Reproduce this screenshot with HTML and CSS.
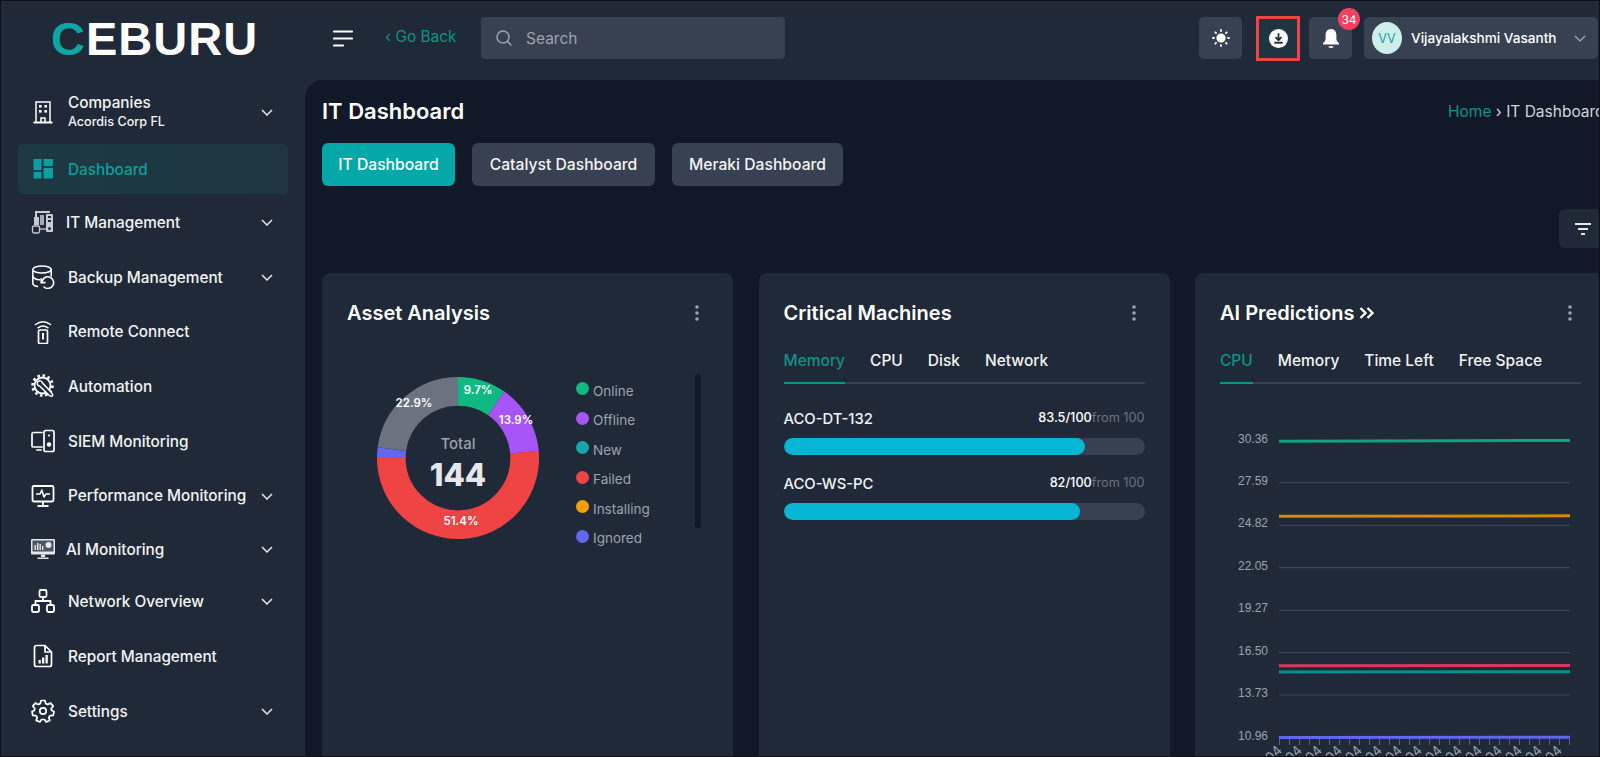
FILE: index.html
```html
<!DOCTYPE html>
<html lang="en">
<head>
<meta charset="utf-8">
<title>IT Dashboard</title>
<link rel="stylesheet" href="styles.css">
</head>
<body>
<header class="topbar">
  <div class="brand"><span class="brand-c">C</span>EBURU</div>
  <button class="hamburger" aria-label="Menu"><svg width="20" height="17" viewBox="0 0 20 17"><path d="M1 1.5H19M1 8.5H19M1 15.5H10" stroke="#fff" stroke-width="2.2" stroke-linecap="round" fill="none"/></svg></button>
  <a class="goback"><span class="goback-arrow">‹</span> Go Back</a>
  <div class="search">
    <svg width="18" height="18" viewBox="0 0 18 18" fill="none" stroke="#9ca3af" stroke-width="1.5"><circle cx="8" cy="8" r="6"/><path d="M12.5 12.5L16 16" stroke-linecap="round"/></svg>
    <span>Search</span>
  </div>
  <div class="top-actions">
    <button class="icon-btn" aria-label="Theme"><svg width="18" height="18" viewBox="0 0 18 18"><circle cx="9" cy="9" r="4.6" fill="#fff"/><g stroke="#fff" stroke-width="1.8" stroke-linecap="round"><path d="M9 1V2M9 16V17M1 9H2M16 9H17M3.3 3.3L4 4M14 14L14.7 14.7M3.3 14.7L4 14M14 4L14.7 3.3"/></g></svg></button>
    <button class="icon-btn download" aria-label="Download"><svg width="19" height="19" viewBox="0 0 18 18"><circle cx="9" cy="9" r="9" fill="#fff"/><path d="M9 4V10M6.2 7.8L9 10.6L11.8 7.8" stroke="#1f2937" stroke-width="1.7" fill="none"/><path d="M5 13H13" stroke="#1f2937" stroke-width="1.8"/></svg></button>
    <button class="icon-btn bell" aria-label="Notifications"><svg width="18" height="21" viewBox="0 0 18 21"><path d="M9 1C5.5 1 3.6 3.8 3.6 7V11C3.6 12.8 2.4 14 1 15.3V16.4H17V15.3C15.6 14 14.4 12.8 14.4 11V7C14.4 3.8 12.5 1 9 1Z" fill="#fff"/><path d="M6.6 18.3H11.4V19.2Q9 20.6 6.6 19.2Z" fill="#fff"/></svg><span class="badge">34</span></button>
    <div class="user">
      <span class="avatar">VV</span>
      <span class="user-name">Vijayalakshmi Vasanth</span>
      <svg class="user-caret" width="12" height="7" viewBox="0 0 12 7" fill="none" stroke="#9ca3af" stroke-width="1.3"><path d="M1 1L6 6L11 1"/></svg>
    </div>
  </div>
</header>

<div class="layout">
  <aside class="sidebar">
    <nav class="nav">
      <a class="nav-item nav-company">
        <svg class="nav-icon" width="24" height="24" viewBox="0 0 24 24" fill="none" stroke="#fff" stroke-width="1.5"><path d="M5 22.5V2H19V22.5"/><path d="M2.5 22.5H21.5" stroke-width="2"/><path d="M10 22.5V18H14V22.5"/><g fill="#fff" stroke="none"><rect x="8" y="5" width="2.6" height="2.6"/><rect x="13.4" y="5" width="2.6" height="2.6"/><rect x="8" y="10" width="2.6" height="2.6"/><rect x="13.4" y="10" width="2.6" height="2.6"/></g></svg>
        <span class="nav-stack"><span class="nav-label">Companies</span><span class="nav-sub">Acordis Corp FL</span></span>
        <svg class="chev" width="12" height="7" viewBox="0 0 12 7"><path d="M1 1L6 6L11 1"/></svg>
      </a>
      <a class="nav-item nav-active">
        <svg class="nav-icon" width="24" height="24" viewBox="0 0 24 24" fill="#0d9f9f"><rect x="2.5" y="2" width="8" height="11"/><rect x="12.5" y="2" width="9.5" height="7"/><rect x="2.5" y="15" width="8" height="6.5"/><rect x="12.5" y="11" width="9.5" height="10.5"/></svg>
        <span class="nav-label">Dashboard</span>
      </a>
      <a class="nav-item nav-close">
        <svg class="nav-icon" width="24" height="24" viewBox="0 0 24 24" fill="#c7ccd3"><path d="M4 1H19V3H6V8H4Z"/><rect x="3" y="7" width="5" height="8"/><rect x="9" y="5" width="4" height="10" opacity=".8"/><rect x="15" y="4" width="7" height="18" rx="1"/><rect x="17" y="6" width="3" height="2" fill="#1f2937"/><rect x="17" y="10" width="3" height="2" fill="#1f2937"/><circle cx="18.5" cy="18.5" r="1.5" fill="#1f2937"/><rect x="1.5" y="16" width="7" height="7" rx="1.5" fill="none" stroke="#c7ccd3" stroke-width="1.3"/><path d="M9 19H15" stroke="#c7ccd3" stroke-width="1.3"/></svg>
        <span class="nav-label">IT Management</span>
        <svg class="chev" width="12" height="7" viewBox="0 0 12 7"><path d="M1 1L6 6L11 1"/></svg>
      </a>
      <a class="nav-item">
        <svg class="nav-icon" width="24" height="24" viewBox="0 0 24 24" fill="none" stroke="#fff" stroke-width="1.6" stroke-linecap="round"><ellipse cx="11" cy="4.5" rx="9.2" ry="3.5"/><path d="M1.8 4.5V18C1.8 19.8 3.5 21 6.5 21.5"/><path d="M20.2 4.5V11"/><path d="M1.8 11.5C2.5 13.5 5 14.5 8.5 14.8"/><path d="M11 17.5A5.8 5.8 0 1 1 13 22"/><path d="M10.2 13.8V17.6H14"/></svg>
        <span class="nav-label">Backup Management</span>
        <svg class="chev" width="12" height="7" viewBox="0 0 12 7"><path d="M1 1L6 6L11 1"/></svg>
      </a>
      <a class="nav-item">
        <svg class="nav-icon" width="24" height="24" viewBox="0 0 24 24" fill="none" stroke="#fff" stroke-width="1.5" stroke-linecap="round"><path d="M4.5 4.5Q12 -1 19.5 4.5"/><path d="M7 7.8Q12 4 17 7.8"/><rect x="7.5" y="10" width="9" height="13.5" rx="1.2" stroke-width="1.7"/><rect x="11" y="13" width="2" height="6.5" fill="#fff" stroke="none"/></svg>
        <span class="nav-label">Remote Connect</span>
      </a>
      <a class="nav-item">
        <svg class="nav-icon" width="24" height="24" viewBox="0 0 24 24" fill="none" stroke="#fff"><circle cx="11.5" cy="11.5" r="8" stroke-width="1.8"/><circle cx="11.5" cy="11.5" r="10" stroke-width="2.6" stroke-dasharray="2.6 2.6"/><path d="M7 7.5C8.5 6.2 11 6.7 11.3 8.8L19.5 17.5C20.8 19 22.6 20.8 21.3 22C20 23 18.2 21.5 17 20.2L8.6 12C6.5 12 5.5 9.5 7 7.5Z" fill="#1f2937" stroke-width="1.5"/></svg>
        <span class="nav-label">Automation</span>
      </a>
      <a class="nav-item">
        <svg class="nav-icon" width="24" height="24" viewBox="0 0 24 24" fill="none" stroke="#fff" stroke-width="1.7" stroke-linecap="round"><path d="M11 3.5H2.5Q1 3.5 1 5V17Q1 18 2.5 18H11"/><path d="M6 21H10"/><rect x="13" y="1.5" width="10" height="21" rx="1.8"/><circle cx="18" cy="6.5" r="1.1" fill="#fff" stroke="none"/><circle cx="18" cy="15.5" r="2.2" fill="#fff" stroke="none"/></svg>
        <span class="nav-label">SIEM Monitoring</span>
      </a>
      <a class="nav-item">
        <svg class="nav-icon" width="24" height="24" viewBox="0 0 24 24" fill="none" stroke="#fff" stroke-width="1.8" stroke-linejoin="round"><rect x="1.5" y="2" width="21" height="15.5" rx="1.5"/><path d="M5 10H9L10.8 6L13 13L15 10H19" stroke-width="1.5"/><path d="M12 17.5V21.5M6.5 22H17.5"/></svg>
        <span class="nav-label">Performance Monitoring</span>
        <svg class="chev" width="12" height="7" viewBox="0 0 12 7"><path d="M1 1L6 6L11 1"/></svg>
      </a>
      <a class="nav-item nav-close nav-h52">
        <svg class="nav-icon" width="24" height="24" viewBox="0 0 24 24"><rect x="0" y="2" width="24" height="15.5" rx="1" fill="#e5e7eb"/><rect x="1.5" y="3.5" width="21" height="11" fill="#4b5563"/><g fill="#e5e7eb"><rect x="3.5" y="8" width="1.4" height="5"/><rect x="6" y="6" width="1.4" height="7"/><rect x="8.500" y="7" width="1.4" height="6"/><rect x="11" y="9" width="1.4" height="4"/><circle cx="17.500" cy="8" r="3"/></g><path d="M10 17.500H14V20H10ZM6.500 20.500H17.500V22H6.500Z" fill="#e5e7eb"/></svg>
        <span class="nav-label">AI Monitoring</span>
        <svg class="chev" width="12" height="7" viewBox="0 0 12 7"><path d="M1 1L6 6L11 1"/></svg>
      </a>
      <a class="nav-item nav-h52">
        <svg class="nav-icon" width="24" height="24" viewBox="0 0 24 24" fill="none" stroke="#fff" stroke-width="1.8"><rect x="8.500" y="1" width="7" height="7" rx="1.400"/><rect x="1" y="16" width="7" height="7" rx="1.400"/><rect x="16" y="16" width="7" height="7" rx="1.400"/><path d="M12 8V12M4.500 16V12H19.500V16"/></svg>
        <span class="nav-label">Network Overview</span>
        <svg class="chev" width="12" height="7" viewBox="0 0 12 7"><path d="M1 1L6 6L11 1"/></svg>
      </a>
      <a class="nav-item nav-h58">
        <svg class="nav-icon" width="24" height="24" viewBox="0 0 24 24" fill="none" stroke="#fff" stroke-width="1.7" stroke-linejoin="round"><path d="M5.500 1.500H14L20.500 8V20.500Q20.500 22.500 18.500 22.500H5.500Q3.500 22.500 3.500 20.500V3.500Q3.500 1.500 5.500 1.500Z"/><path d="M14 1.500V8H20.500"/><g fill="#fff" stroke="none"><rect x="7.500" y="16" width="2.300" height="3.500"/><rect x="11" y="13.500" width="2.300" height="6"/><rect x="14.500" y="11" width="2.300" height="8.500"/></g></svg>
        <span class="nav-label">Report Management</span>
      </a>
      <a class="nav-item nav-h52">
        <svg class="nav-icon" width="26" height="26" viewBox="0 0 24 24" fill="none" stroke="#fff" stroke-width="1.700" stroke-linejoin="round"><circle cx="12" cy="12" r="3.200"/><path d="M10 1.500H14L14.700 4.600L16.800 5.500L19.500 3.900L22.200 7.100L20.200 9.500L20.700 11.500L23 12.500L22.200 16.500L19 16.700L17.800 18.500L18.800 21.400L15.200 23L13.500 20.500H10.500L8.800 23L5.200 21.400L6.200 18.500L5 16.700L1.800 16.500L1 12.500L3.300 11.500L3.800 9.500L1.800 7.100L4.500 3.900L7.200 5.500L9.300 4.600Z"/></svg>
        <span class="nav-label">Settings</span>
        <svg class="chev" width="12" height="7" viewBox="0 0 12 7"><path d="M1 1L6 6L11 1"/></svg>
      </a>
    </nav>
  </aside>

  <main class="main">
    <div class="main-inner">
      <div class="page-head">
        <h1 class="page-title">IT Dashboard</h1>
        <div class="crumbs"><span class="crumb-home">Home</span> <span class="crumb-sep">›</span> <span>IT Dashboard</span></div>
      </div>
      <div class="dash-tabs">
        <button class="dash-tab dash-tab-on">IT Dashboard</button>
        <button class="dash-tab">Catalyst Dashboard</button>
        <button class="dash-tab">Meraki Dashboard</button>
      </div>
      <div class="filter-row">
        <button class="filter-btn" aria-label="Filter"><svg width="16" height="12" viewBox="0 0 16 12"><path d="M0 1H16M3 6H13M6 11H10" stroke="#e5e7eb" stroke-width="1.800" fill="none"/></svg></button>
      </div>

      <div class="cards">
        <section class="card">
          <div class="card-head">
            <h2 class="card-title">Asset Analysis</h2>
            <svg class="kebab" width="4" height="16" viewBox="0 0 4 16" fill="#9ca3af"><circle cx="2" cy="2" r="1.800"/><circle cx="2" cy="8" r="1.800"/><circle cx="2" cy="14" r="1.800"/></svg>
          </div>
          <div class="asset-body">
            <svg class="donut" width="200" height="200" viewBox="0 0 200 200">
              <g fill="none" stroke-width="28.700">
                <path d="M100 33.300A66.700 66.700 0 0 1 138.180 45.310" stroke="#10b981"/>
                <path d="M138.180 45.310A66.700 66.700 0 0 1 166.440 94.140" stroke="#a855f7"/>
                <path d="M166.440 94.140A66.700 66.700 0 1 1 33.300 100" stroke="#ef4444"/>
                <path d="M33.300 100A66.700 66.700 0 0 1 33.880 91.220" stroke="#6366f1"/>
                <path d="M33.880 91.220A66.700 66.700 0 0 1 100 33.300" stroke="#6b7280"/>
              </g>
              <g class="donut-pct" text-anchor="middle">
                <text x="120" y="36">9.7%</text>
                <text x="158" y="66">13.9%</text>
                <text x="103" y="166.500">51.4%</text>
                <text x="56" y="49">22.9%</text>
              </g>
              <text class="donut-total" x="100" y="90.500" text-anchor="middle">Total</text>
              <text class="donut-num" x="100" y="127.500" text-anchor="middle">144</text>
            </svg>
            <ul class="legend">
              <li><i class="dot dot-online"></i>Online</li>
              <li><i class="dot dot-offline"></i>Offline</li>
              <li><i class="dot dot-new"></i>New</li>
              <li><i class="dot dot-failed"></i>Failed</li>
              <li><i class="dot dot-installing"></i>Installing</li>
              <li><i class="dot dot-ignored"></i>Ignored</li>
            </ul>
            <div class="legend-scroll"></div>
          </div>
        </section>

        <section class="card">
          <div class="card-head">
            <h2 class="card-title">Critical Machines</h2>
            <svg class="kebab" width="4" height="16" viewBox="0 0 4 16" fill="#9ca3af"><circle cx="2" cy="2" r="1.800"/><circle cx="2" cy="8" r="1.800"/><circle cx="2" cy="14" r="1.800"/></svg>
          </div>
          <div class="tabs">
            <span class="tab tab-on">Memory</span><span class="tab">CPU</span><span class="tab">Disk</span><span class="tab">Network</span>
          </div>
          <div class="machines">
            <div class="machine">
              <div class="machine-row"><span class="machine-name">ACO-DT-132</span><span class="machine-val"><b>83.5/100</b><span class="machine-from">from 100</span></span></div>
              <div class="bar"><div class="bar-fill" style="width:83.5%"></div></div>
            </div>
            <div class="machine">
              <div class="machine-row"><span class="machine-name">ACO-WS-PC</span><span class="machine-val"><b>82/100</b><span class="machine-from">from 100</span></span></div>
              <div class="bar"><div class="bar-fill" style="width:82%"></div></div>
            </div>
          </div>
        </section>

        <section class="card">
          <div class="card-head">
            <h2 class="card-title">AI Predictions <svg class="dbl" width="16" height="14" viewBox="0 0 16 14" fill="none" stroke="#fff" stroke-width="2.400"><path d="M1.500 2L6.500 7L1.500 12M8.500 2L13.500 7L8.500 12"/></svg></h2>
            <svg class="kebab" width="4" height="16" viewBox="0 0 4 16" fill="#9ca3af"><circle cx="2" cy="2" r="1.800"/><circle cx="2" cy="8" r="1.800"/><circle cx="2" cy="14" r="1.800"/></svg>
          </div>
          <div class="tabs">
            <span class="tab tab-on">CPU</span><span class="tab">Memory</span><span class="tab">Time Left</span><span class="tab">Free Space</span>
          </div>
          <svg class="chart" width="411" height="360" viewBox="1195 400 411 360">
            <g class="chart-y" text-anchor="end">
              <text x="1268" y="443">30.36</text><text x="1268" y="485">27.59</text><text x="1268" y="527">24.82</text><text x="1268" y="569.500">22.05</text><text x="1268" y="612">19.27</text><text x="1268" y="654.500">16.50</text><text x="1268" y="697">13.73</text><text x="1268" y="739.500">10.96</text>
            </g>
            <g stroke="#3d4654" stroke-width="1.200">
              <path d="M1279 482.700H1570M1279 525.300H1570M1279 567.700H1570M1279 610.300H1570M1279 652.700H1570M1279 695H1570"/>
            </g>
            <g fill="none" stroke-width="3">
              <path d="M1279 441.200L1570 440.400" stroke="#10a37f"/>
              <path d="M1279 516.300L1570 515.800" stroke="#d98a0b"/>
              <path d="M1279 665.800L1570 665.400" stroke="#d93a5c"/>
              <path d="M1279 672L1570 671.800" stroke="#0a8f8c"/>
              <path d="M1279 737.500L1570 737.200" stroke="#6366f1"/>
            </g>
            <path stroke="#5b6472" stroke-width="1" d="M1279.500 739V745M1289.500 739V745M1299.500 739V745M1309.500 739V745M1319.500 739V745M1329.500 739V745M1339.500 739V745M1349.500 739V745M1359.500 739V745M1369.500 739V745M1379.500 739V745M1389.500 739V745M1399.500 739V745M1409.500 739V745M1419.500 739V745M1429.500 739V745M1439.500 739V745M1449.500 739V745M1459.500 739V745M1469.500 739V745M1479.500 739V745M1489.500 739V745M1499.500 739V745M1509.500 739V745M1519.500 739V745M1529.500 739V745M1539.500 739V745M1549.500 739V745M1559.500 739V745M1569.500 739V745"/>
            <g class="chart-x" text-anchor="end">
              <text transform="translate(1283 751) rotate(-45)">04</text><text transform="translate(1303 751) rotate(-45)">04</text><text transform="translate(1323 751) rotate(-45)">04</text><text transform="translate(1343 751) rotate(-45)">04</text><text transform="translate(1363 751) rotate(-45)">04</text><text transform="translate(1383 751) rotate(-45)">04</text><text transform="translate(1403 751) rotate(-45)">04</text><text transform="translate(1423 751) rotate(-45)">04</text><text transform="translate(1443 751) rotate(-45)">04</text><text transform="translate(1463 751) rotate(-45)">04</text><text transform="translate(1483 751) rotate(-45)">04</text><text transform="translate(1503 751) rotate(-45)">04</text><text transform="translate(1523 751) rotate(-45)">04</text><text transform="translate(1543 751) rotate(-45)">04</text><text transform="translate(1563 751) rotate(-45)">04</text>
            </g>
          </svg>
        </section>
      </div>
    </div>
  </main>
</div>
</body>
</html>
```

FILE: styles.css
```css
* { box-sizing: border-box; }
html, body { margin: 0; padding: 0; height: 100%; }
body {
  width: 1600px;
  height: 757px;
  overflow: hidden;
  background: #1f2937;
  border: 1px solid #0d1117;
  font-family: Inter, "Noto Sans", sans-serif;
  color: #fff;
  display: flex;
  flex-direction: column;
}
button { font: inherit; color: inherit; border: 0; padding: 0; background: none; }
h1, h2, ul { margin: 0; padding: 0; }

/* top bar */
.topbar { height: 79px; flex: none; display: flex; align-items: center; padding-bottom: 5px; }
.brand {
  width: 332px;
  padding-left: 50px;
  font-family: "Liberation Sans", sans-serif;
  font-size: 47px;
  font-weight: 700;
  letter-spacing: 1px;
  line-height: 1;
}
.brand-c { color: #0ea5a5; }
.hamburger { width: 20px; height: 17px; display: flex; }
.goback { margin: -5px 0 0 32px; width: 96px; color: #0d9488; font-size: 15.400px; white-space: nowrap; }
.goback-arrow { font-size: 16px; }
.search {
  width: 304px; height: 42px; background: #374151; border-radius: 4px;
  display: flex; align-items: center; gap: 13px; padding-left: 14px;
  color: #9ca3af; font-size: 15.500px;
}
.top-actions { margin-left: auto; display: flex; align-items: center; padding-right: 1px; }
.icon-btn {
  position: relative; width: 43px; height: 42px; background: #374151; border-radius: 5px;
  display: flex; align-items: center; justify-content: center;
}
.download {
  width: 44px; height: 45px; margin: 0 9px 0 14px;
  background: #1f3441; border: 3px solid #ef4444; border-radius: 0;
}
.badge {
  position: absolute; top: -9px; right: -8px; width: 22px; height: 22px; border-radius: 50%;
  background: #f43f5e; color: #fff; font-size: 12px; display: flex; align-items: center; justify-content: center;
}
.user {
  margin-left: 12px; width: 234px; height: 42px; background: #374151; border-radius: 5px;
  display: flex; align-items: center; padding-left: 8px;
}
.avatar {
  width: 30px; height: 32px; border-radius: 50%; background: #cdeeea; color: #14a3a3;
  font-size: 12.5px; display: flex; align-items: center; justify-content: center;
}
.user-name { margin-left: 9px; font-size: 13.600px; font-weight: 500; white-space: nowrap; }
.user-caret { margin-left: auto; margin-right: 12px; }

/* layout */
.layout { flex: 1; display: flex; min-height: 0; }
.sidebar { width: 304px; flex: none; }
.nav { padding-top: 4px; display: flex; flex-direction: column; }
.nav-item {
  height: 54.7px; flex: none; display: flex; align-items: center; position: relative;
  padding-left: 30px; margin-right: 16px; font-size: 15.300px; font-weight: 500; color: #f3f4f6;
}
.nav-icon { flex: none; width: 24px; margin-right: 13px; }
.nav-close .nav-icon { margin-right: 11px; }
.nav-label { white-space: nowrap; }
.nav-stack { display: flex; flex-direction: column; gap: 2px; margin-top: -2px; }
.nav-sub { font-size: 12.600px; }
.nav-company { height: 55px; }
.nav-active {
  height: 50px; margin: 5px 17px 1px 17px; padding-left: 13px; border-radius: 5px;
  background: linear-gradient(90deg, #1c3a44, #1f3640);
  color: #0d9f9f;
}
.nav-h52 { height: 52px; }
.nav-h58 { height: 58px; }
.chev { position: absolute; right: 16px; top: 50%; margin-top: -3px; fill: none; stroke: #e5e7eb; stroke-width: 1.500; }

/* main */
.main { flex: 1; min-width: 0; background: #111827; border-top-left-radius: 18px; overflow: hidden; padding: 0 0 0 17px; }
.main-inner { width: 1285px; }
.page-head { height: 63px; display: flex; align-items: center; justify-content: space-between; padding-bottom: 1px; }
.page-title { font-size: 22px; font-weight: 600; white-space: nowrap; }
.crumbs { font-size: 15.500px; color: #d1d5db; white-space: nowrap; width: 159px; }
.crumb-home { color: #0d9488; }
.dash-tabs { display: flex; gap: 17px; }
.dash-tab { height: 43px; background: #374151; border-radius: 6px; font-size: 15.700px; font-weight: 500; color: #f3f4f6; white-space: nowrap; }
.dash-tab-on { background: #05a8a8; color: #fff; }
.dash-tab:nth-child(1) { width: 133px; }
.dash-tab:nth-child(2) { width: 183px; }
.dash-tab:nth-child(3) { width: 171px; }
.filter-row { display: flex; justify-content: flex-end; margin-top: 23px; }
.filter-btn { width: 48px; height: 39px; background: #1f2937; border-radius: 6px; display: flex; align-items: center; justify-content: center; }

/* cards */
.cards { display: grid; grid-template-columns: repeat(3, 411px); gap: 25.500px; margin-top: 25px; }
.card { height: 520px; background: #1f2937; border-radius: 8px; padding: 25px; overflow: hidden; }
.card-head { height: 30px; display: flex; align-items: center; justify-content: space-between; }
.card-title { font-size: 20px; font-weight: 600; display: flex; align-items: center; gap: 5px; white-space: nowrap; }
.kebab { margin-right: 9px; }
.asset-body { display: flex; align-items: flex-start; margin-top: 45px; position: relative; margin-left: 11px; }
.donut { flex: none; margin-top: -15.500px; }
.donut-pct { font-size: 11.500px; font-weight: 600; fill: #fff; }
.donut-total { font-size: 15px; font-weight: 500; fill: #9ca3af; }
.donut-num { font-size: 31px; font-weight: 800; fill: #e5e7eb; }
.legend { list-style: none; margin-left: 18px; width: 119px; margin-top: 3px; flex: none; }
.legend li { height: 29.500px; display: flex; align-items: center; font-size: 13.500px; color: #9ca3af; white-space: nowrap; }
.dot { width: 13px; height: 13px; border-radius: 50%; margin-right: 4px; margin-top: -4px; flex: none; }
.dot-online { background: #10b981; }
.dot-offline { background: #a855f7; }
.dot-new { background: #14a8a8; }
.dot-failed { background: #ef4444; }
.dot-installing { background: #f59e0b; }
.dot-ignored { background: #6366f1; }
.legend-scroll { width: 6px; height: 154px; margin-top: 1px; background: #111827; border-radius: 4px; flex: none; }

.tabs { margin-top: 16px; height: 40px; display: flex; gap: 25px; border-bottom: 2px solid #374151; align-items: flex-start; }
.tab { position: relative; height: 40px; padding-top: 7px; font-size: 15.500px; font-weight: 500; color: #f3f4f6; white-space: nowrap; }
.tab-on { color: #0d9488; }
.tab-on::after { content: ""; position: absolute; left: 0; right: 0; bottom: 0; height: 2px; background: #0d9488; }

.machines { margin-top: 23px; display: flex; flex-direction: column; gap: 17px; }
.machine-row { display: flex; justify-content: space-between; align-items: center; height: 24px; }
.machine-name { font-size: 14.800px; font-weight: 500; color: #f3f4f6; }
.machine-val { font-size: 12.700px; margin-top: -4px; }
.machine-val b { font-weight: 500; }
.machine-from { color: #6b7280; }
.bar { height: 17px; margin-top: 7px; background: #374151; border-radius: 9px; overflow: hidden; }
.bar-fill { height: 100%; background: #06b6d4; border-radius: 9px; }

.chart { display: block; margin: 16px 0 0 -25px; }
.chart-y { font-size: 12px; fill: #9ca3af; font-family: "Liberation Sans", sans-serif; }
.chart-x { font-size: 13.500px; fill: #9ca3af; }
```
